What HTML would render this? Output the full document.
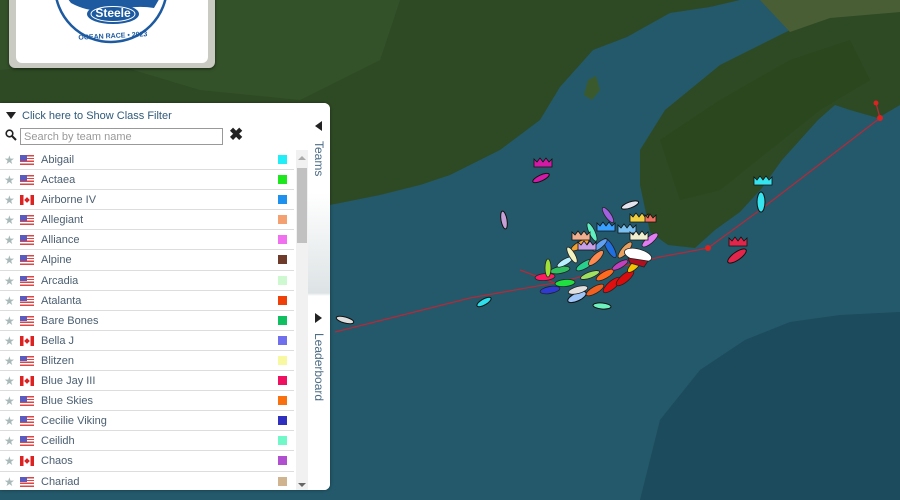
<!DOCTYPE html>
<html><head><meta charset="utf-8"><style>
*{margin:0;padding:0;box-sizing:border-box}
body{width:900px;height:500px;overflow:hidden;position:relative;font-family:"Liberation Sans",sans-serif;background:#23596a}
#map{position:absolute;left:0;top:0}
.logo{position:absolute;left:9px;top:-6px;width:206px;height:74px;background:#c9cbc2;border-radius:6px;box-shadow:0 1px 3px rgba(0,0,0,.5)}
.logo .in{position:absolute;left:7px;top:0;width:192px;height:69px;background:#fff;border-radius:0 0 6px 6px;overflow:hidden}
.panel{position:absolute;left:0;top:103px;width:330px;height:387px;background:#fff;border-radius:0 6px 6px 0;box-shadow:0 0 3px rgba(0,0,0,.4)}
.hdr{position:absolute;left:6px;top:7px;font-size:11px;color:#2e5a7a}
.hdr:before{content:"";display:inline-block;border-left:5px solid transparent;border-right:5px solid transparent;border-top:7px solid #222;margin-right:6px;vertical-align:0}
.search{position:absolute;left:20px;top:25px;width:203px;height:17px;border:1px solid #999;font-size:11px;color:#999;padding:2px 3px}
.x{position:absolute;left:229px;top:22px;font-size:17px;font-weight:bold;color:#222}
.rows{position:absolute;left:0;top:47px;width:294px}
.row{height:20.1px;border-bottom:1px solid #ddd;position:relative;font-size:11px;color:#4a5e70}
.row .s{position:absolute;left:4px;top:3px;color:#a9b9b9;font-size:12px}
.row .f{position:absolute;left:20px;top:5px;width:14px;height:10px}
.row .n{position:absolute;left:41px;top:4px}
.row .c{position:absolute;left:278px;top:5px;width:9px;height:9px}
.us{background:repeating-linear-gradient(#d44 0 1.4px,#fff 1.4px 2.8px)}
.us:after{content:"";position:absolute;left:0;top:0;width:7px;height:5.5px;background:#5b5bbf}
.ca{background:linear-gradient(90deg,#d22 0 3.5px,#fff 3.5px 10.5px,#d22 10.5px)}
.ca:after{content:"";position:absolute;left:5px;top:3px;width:4px;height:4px;background:#d22;transform:rotate(45deg)}
.sb{position:absolute;left:296px;top:47px;width:12px;height:340px;background:#f1f1f1}
.th{position:absolute;left:297px;top:65px;width:10px;height:75px;background:#c1c1c1}
.tab{position:absolute;left:308px;top:0;width:22px;height:387px;background:linear-gradient(#fff 0,#fff 90px,#dde3e5 190px,#fff 193px);border-radius:0 6px 6px 0}
.vt{position:absolute;writing-mode:vertical-rl;font-size:12px;color:#4d6d86;left:312px}
.tri{position:absolute;width:0;height:0}
</style></head><body>
<svg id="map" width="900" height="500" viewBox="0 0 900 500">
<rect width="900" height="500" fill="#23596a"/>
<path d="M640 500 L660 420 L700 370 L745 340 L790 322 L840 315 L900 312 L900 500Z" fill="#1b4b5d"/>
<path d="M0 0 L900 0 L900 500 L330 500 L330 205 L0 205Z" fill="#2e4a24"/>
<path d="M0 0 L400 0 L380 60 L300 100 L200 90 L100 60 L0 70Z" fill="#33522a"/>
<path d="M330 205 L380 195 L420 185 L450 175 L500 150 L540 120 L560 87 L593 50 L627 37 L670 13 L710 7 L740 0 L800 0 L790 30 L720 65 L665 110 L640 150 L640 185 L650 232 L668 245 L695 248 L715 230 L740 212 L762 188 L782 160 L800 140 L818 120 L835 105 L850 110 L878 118 L900 105 L900 500 L330 500Z" fill="#23596a"/>
<path d="M640 500 L660 420 L700 370 L745 340 L790 322 L840 315 L900 312 L900 500Z" fill="#1b4b5d"/>
<path d="M588 80 L596 76 L600 90 L592 100 L584 95Z" fill="#3a5a2e"/>
<path d="M660 140 L720 100 L790 60 L850 40 L870 80 L820 110 L770 150 L720 190 L680 200Z" fill="#29461c" opacity=".7"/>
<path d="M760 0 L900 0 L900 12 L830 18 L790 32 Z" fill="#4a5e35"/>
<g stroke="#b22a3a" stroke-width="1.3" fill="none"><path d="M335 332 L470 298 L560 282 L660 257 L708 248 L760 210 L880 118 L876 103"/><path d="M520 270 L560 285"/></g>
<circle cx="708" cy="248" r="3" fill="#d22"/><circle cx="880" cy="118" r="3" fill="#d22"/><circle cx="876" cy="103" r="2.5" fill="#d22"/>
<g stroke="#111" stroke-width="1">
<ellipse cx="345" cy="320" rx="9" ry="3" fill="#ddd" transform="rotate(15 345 320)"/>
<ellipse cx="484" cy="302" rx="8" ry="3" fill="#2de0ee" transform="rotate(-30 484 302)"/>
<ellipse cx="541" cy="178" rx="9" ry="3" fill="#d21aa6" transform="rotate(-25 541 178)"/>
<ellipse cx="504" cy="220" rx="9" ry="3" fill="#c7a0d8" transform="rotate(80 504 220)"/>
<ellipse cx="737" cy="256" rx="11" ry="4" fill="#e2254a" transform="rotate(-35 737 256)"/>
<ellipse cx="761" cy="202" rx="10" ry="4" fill="#35e4ef" transform="rotate(90 761 202)"/>
<ellipse cx="630" cy="205" rx="9" ry="3" fill="#e3e3ee" transform="rotate(-20 630 205)"/>
<ellipse cx="577" cy="297" rx="10" ry="4" fill="#9ec5f7" transform="rotate(-25 577 297)"/>
<ellipse cx="602" cy="306" rx="9" ry="3" fill="#6ff0bf" transform="rotate(5 602 306)"/>
</g>
<g stroke="#222" stroke-width=".8">
<ellipse cx="550" cy="290" rx="10" ry="3.5" fill="#2f3bd0" transform="rotate(-10 550 290)"/>
<ellipse cx="565" cy="283" rx="10" ry="3.5" fill="#1fe040" transform="rotate(-5 565 283)"/>
<ellipse cx="545" cy="277" rx="10" ry="3.5" fill="#ff1b60" transform="rotate(-5 545 277)"/>
<ellipse cx="560" cy="270" rx="10" ry="3.5" fill="#30c060" transform="rotate(-10 560 270)"/>
<ellipse cx="578" cy="290" rx="10" ry="3.5" fill="#e0e0e0" transform="rotate(-15 578 290)"/>
<ellipse cx="595" cy="290" rx="10" ry="3.5" fill="#f06020" transform="rotate(-30 595 290)"/>
<ellipse cx="612" cy="285" rx="11" ry="4" fill="#e01010" transform="rotate(-40 612 285)"/>
<ellipse cx="625" cy="278" rx="11" ry="4" fill="#d80c0c" transform="rotate(-40 625 278)"/>
<ellipse cx="605" cy="275" rx="10" ry="3.5" fill="#ff6a1f" transform="rotate(-30 605 275)"/>
<ellipse cx="635" cy="265" rx="10" ry="3.5" fill="#f5c400" transform="rotate(-45 635 265)"/>
<ellipse cx="585" cy="265" rx="10" ry="3.5" fill="#27d08c" transform="rotate(-30 585 265)"/>
<ellipse cx="565" cy="262" rx="9" ry="3" fill="#b8f0ff" transform="rotate(-30 565 262)"/>
<ellipse cx="596" cy="258" rx="10" ry="3.5" fill="#ff8a50" transform="rotate(-45 596 258)"/>
<ellipse cx="580" cy="245" rx="10" ry="3.5" fill="#f0a030" transform="rotate(-30 580 245)"/>
<ellipse cx="610" cy="248" rx="11" ry="3.5" fill="#1f6fe0" transform="rotate(60 610 248)"/>
<ellipse cx="625" cy="250" rx="10" ry="3.5" fill="#e8a060" transform="rotate(-50 625 250)"/>
<ellipse cx="650" cy="240" rx="10" ry="3.5" fill="#e27cf3" transform="rotate(-40 650 240)"/>
<ellipse cx="592" cy="232" rx="10" ry="3" fill="#5ef0c0" transform="rotate(65 592 232)"/>
<ellipse cx="608" cy="215" rx="9" ry="3" fill="#a060e0" transform="rotate(55 608 215)"/>
<ellipse cx="548" cy="268" rx="9" ry="3" fill="#9fe03a" transform="rotate(90 548 268)"/>
<ellipse cx="572" cy="255" rx="9" ry="3" fill="#f3f3c0" transform="rotate(60 572 255)"/>
<ellipse cx="590" cy="275" rx="10" ry="3" fill="#a0e060" transform="rotate(-20 590 275)"/>
<ellipse cx="620" cy="265" rx="9" ry="3" fill="#c040c0" transform="rotate(-30 620 265)"/>
<ellipse cx="600" cy="245" rx="9" ry="3" fill="#60a0f0" transform="rotate(-40 600 245)"/>
<ellipse cx="638" cy="255" rx="14" ry="6" fill="#fff" transform="rotate(15 638 255)"/>
<path d="M628 258 l20 3 l-4 6 l-14 -4z" fill="#b01020"/>
</g>
<g stroke="#111" stroke-width=".8">
<path d="M534 167 l0-8 l3 3 l3-4 l3 4 l3-4 l3 4 l3-3 l0 8z" fill="#d21aa6"/>
<path d="M729 246 l0-8 l3 3 l3-4 l3 4 l3-4 l3 4 l3-3 l0 8z" fill="#e2254a"/>
<path d="M754 185 l0-8 l3 3 l3-4 l3 4 l3-4 l3 4 l3-3 l0 8z" fill="#35e4ef"/>
<path d="M630 222 l0-8 l3 3 l3-4 l3 4 l3-4 l3 4 l3-3 l0 8z" fill="#f0d040"/>
<path d="M645 222 l0-7 l3 3 l2-4 l3 4 l3-3 l0 7z" fill="#f07060"/>
<path d="M597 231 l0-8 l3 3 l3-4 l3 4 l3-4 l3 4 l3-3 l0 8z" fill="#3aa0ff"/>
<path d="M572 240 l0-8 l3 3 l3-4 l3 4 l3-4 l3 4 l3-3 l0 8z" fill="#f0b090"/>
<path d="M618 233 l0-8 l3 3 l3-4 l3 4 l3-4 l3 4 l3-3 l0 8z" fill="#7ac0f0"/>
<path d="M578 250 l0-8 l3 3 l3-4 l3 4 l3-4 l3 4 l3-3 l0 8z" fill="#c8a0e8"/>
<path d="M630 240 l0-8 l3 3 l3-4 l3 4 l3-4 l3 4 l3-3 l0 8z" fill="#f0f0d0"/>
</g>
</svg>
<div class="logo"><div class="in">
<svg width="192" height="69" viewBox="0 0 192 69">
<circle cx="95" cy="-8" r="56" fill="#fff" stroke="#1d5aa0" stroke-width="2.5"/>
<path d="M48 0 Q80 10 100 3 Q125 -3 145 2 L138 14 Q120 11 100 16 Q75 20 55 9Z" fill="#1d5aa0"/>
<ellipse cx="97" cy="20" rx="26" ry="10" fill="#1d5aa0"/>
<ellipse cx="97" cy="20" rx="22" ry="7.5" fill="none" stroke="#fff" stroke-width="1"/>
<text x="97" y="23" text-anchor="middle" font-size="12" font-weight="bold" fill="#fff" font-family="Liberation Sans">Steele</text>
<text x="97" y="44" text-anchor="middle" font-size="7" font-weight="bold" fill="#1d5aa0" font-family="Liberation Sans" transform="rotate(-3 97 44)">OCEAN RACE • 2023</text>
</svg></div></div>
<div class="panel">
<div class="hdr">Click here to Show Class Filter</div>
<svg style="position:absolute;left:5px;top:26px" width="12" height="12"><circle cx="4.5" cy="4.5" r="3.3" fill="none" stroke="#222" stroke-width="1.6"/><path d="M7 7 L11 11" stroke="#222" stroke-width="2"/></svg>
<div class="search">Search by team name</div>
<div class="x">✖</div>
<div class="rows">
<div class="row"><span class="s">★</span><span class="f us"></span><span class="n">Abigail</span><span class="c" style="background:#22eef8"></span></div>
<div class="row"><span class="s">★</span><span class="f us"></span><span class="n">Actaea</span><span class="c" style="background:#1de81d"></span></div>
<div class="row"><span class="s">★</span><span class="f ca"></span><span class="n">Airborne IV</span><span class="c" style="background:#1e90ee"></span></div>
<div class="row"><span class="s">★</span><span class="f us"></span><span class="n">Allegiant</span><span class="c" style="background:#f4a070"></span></div>
<div class="row"><span class="s">★</span><span class="f us"></span><span class="n">Alliance</span><span class="c" style="background:#f070f0"></span></div>
<div class="row"><span class="s">★</span><span class="f us"></span><span class="n">Alpine</span><span class="c" style="background:#6e3a2a"></span></div>
<div class="row"><span class="s">★</span><span class="f us"></span><span class="n">Arcadia</span><span class="c" style="background:#cdf8d0"></span></div>
<div class="row"><span class="s">★</span><span class="f us"></span><span class="n">Atalanta</span><span class="c" style="background:#f0400a"></span></div>
<div class="row"><span class="s">★</span><span class="f us"></span><span class="n">Bare Bones</span><span class="c" style="background:#10c060"></span></div>
<div class="row"><span class="s">★</span><span class="f ca"></span><span class="n">Bella J</span><span class="c" style="background:#7070ee"></span></div>
<div class="row"><span class="s">★</span><span class="f us"></span><span class="n">Blitzen</span><span class="c" style="background:#f8f8a0"></span></div>
<div class="row"><span class="s">★</span><span class="f ca"></span><span class="n">Blue Jay III</span><span class="c" style="background:#f01060"></span></div>
<div class="row"><span class="s">★</span><span class="f us"></span><span class="n">Blue Skies</span><span class="c" style="background:#f87010"></span></div>
<div class="row"><span class="s">★</span><span class="f us"></span><span class="n">Cecilie Viking</span><span class="c" style="background:#3030c0"></span></div>
<div class="row"><span class="s">★</span><span class="f us"></span><span class="n">Ceilidh</span><span class="c" style="background:#70f8c8"></span></div>
<div class="row"><span class="s">★</span><span class="f ca"></span><span class="n">Chaos</span><span class="c" style="background:#b050d0"></span></div>
<div class="row" style="border:0"><span class="s">★</span><span class="f us"></span><span class="n">Chariad</span><span class="c" style="background:#d0b490"></span></div>
</div>
<div class="sb"></div><div class="th"></div>
<div class="tri" style="left:298px;top:53px;border-left:4px solid transparent;border-right:4px solid transparent;border-bottom:4px solid #aaa"></div>
<div class="tri" style="left:298px;top:380px;border-left:4px solid transparent;border-right:4px solid transparent;border-top:4px solid #666"></div>
<div class="tab"></div>
<div class="tri" style="left:315px;top:18px;border-top:5px solid transparent;border-bottom:5px solid transparent;border-right:7px solid #222"></div>
<div class="vt" style="top:38px">Teams</div>
<div class="tri" style="left:315px;top:210px;border-top:5px solid transparent;border-bottom:5px solid transparent;border-left:7px solid #222"></div>
<div class="vt" style="top:230px">Leaderboard</div>
</div>
</body></html>
